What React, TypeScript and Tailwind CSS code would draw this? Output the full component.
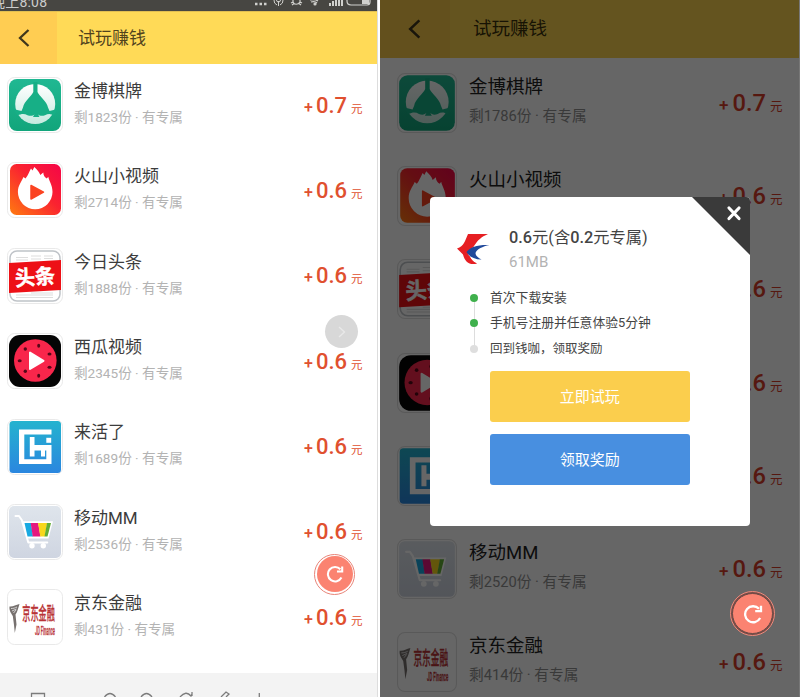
import React from "react";

const FONT = "font-['Roboto','Noto_Sans_CJK_SC',sans-serif]";

function Artwork({ name }: { name: string }) {
  switch (name) {
    case "spade":
      return (
        <g>
          <rect x="2" y="2" width="52" height="52" rx="8" fill="url(#gGreen)" />
          <circle cx="28.2" cy="27" r="20" fill="url(#gPale)" />
          <path d="M26.300 5h4.200v10c1.500 4 9.500 9.500 10.500 15.500l1.500 3.500 8-2-3.500 6.500c-3-2-6-2-9-.3-2.500 1-5.500 1-7-1l1.500 2.800h-6.500l1.500-2.800c-1.500 2-4.500 2-7 1-3-1.700-6-1.700-10 .3L6 32l8.500 2 1.500-3.500c1-6 8.800-11.500 10.300-15.500z" fill="#17af86" />
        </g>
      );
    case "flame":
      return (
        <g>
          <rect x="3" y="2" width="51" height="51" rx="6.500" fill="url(#gFire)" />
          <path d="M27.300 5c3 3 5 5 6 8l3-2.500c0 3 1.500 5 3.500 6l1.500-1.800c.3 3.500 4.200 8 4.200 15.300a17.300 17.300 0 0 1-34.600 0c0-6.500 3.500-10 5.600-15l2 1.500C21 13.500 23 8 24 6.500l1.500 2z" fill="#fff" />
          <path d="M24 23.500v13.500l12.500-6.800z" fill="#fb4321" stroke="#fb4321" strokeWidth="1.500" strokeLinejoin="round" />
        </g>
      );
    case "toutiao":
      return (
        <g>
          <rect x="3" y="3" width="50" height="50" rx="7" fill="#fff" stroke="#bfc3c8" strokeWidth="1.500" />
          <path d="M9 9.500h12M9 12h12M24 8h10M24 11h10M37 8h9M37 10.500h9M9 47h37M9 49.500h37M24 45h22" stroke="#ddd" strokeWidth="1" />
          <path d="M2 15 54 12v30L2 45z" fill="#ed1016" />
          <text x="8" y="36.500" fontSize="21" fontWeight="700" textLength="40" lengthAdjust="spacingAndGlyphs" fill="#fff" stroke="#fff" strokeWidth=".5" transform="rotate(-4 28 30)">头条</text>
        </g>
      );
    case "melon":
      return (
        <g>
          <rect x="2" y="2" width="52" height="52" rx="11" fill="#050505" />
          <circle cx="28.300" cy="27.500" r="21.300" fill="#f8264b" />
          <g fill="#540818">
            <ellipse cx="31.700" cy="12.700" rx="1.500" ry="2" />
            <ellipse cx="42.500" cy="21" rx="2" ry="1.500" />
            <ellipse cx="42.500" cy="34.300" rx="2" ry="1.500" />
            <ellipse cx="31.700" cy="42.700" rx="1.500" ry="2" />
            <ellipse cx="18.300" cy="38.300" rx="1.700" ry="1.700" />
            <ellipse cx="12.700" cy="27.700" rx="2" ry="1.500" />
            <ellipse cx="18.300" cy="16" rx="1.700" ry="1.700" />
          </g>
          <path d="M23 19.500v16.500l13.500-8.200z" fill="#fff" stroke="#fff" strokeWidth="2" strokeLinejoin="round" />
        </g>
      );
    case "laihuo":
      return (
        <g>
          <rect x="2.500" y="2" width="51.500" height="52" rx="3.500" fill="url(#gBlue)" />
          <path d="M12 10.500h32.500v5H17.300v24.700h22V31.500H27.500v6h-4.700V18h4.700v8h17v19H12z" fill="#fff" />
          <path d="M39.300 18.800h4.900v5h-4.900z" fill="#fff" />
          <path d="M34 31h4v6.500h-4z" fill="#fff" />
        </g>
      );
    case "cart":
      return (
        <g>
          <rect x="2" y="2" width="52" height="52" rx="5" fill="url(#gCart)" />
          <path d="M8.500 12h3.500l2.800 4 6.500 22.500h19" fill="none" stroke="#fff" strokeWidth="2" strokeLinecap="round" strokeLinejoin="round" />
          <path d="M15.500 17.200h30.500l-4.500 17.300H20z" fill="#fff" />
          <path d="M17.500 19h6.500l2 13.500h-5.500z" fill="#18a9e1" />
          <path d="M23.700 19h7.500l2.300 13.500h-7.800z" fill="#e4187f" />
          <path d="M31 19h9.200l-2.500 13.500h-4.400z" fill="#f7d71c" />
          <path d="M40 19h4l-3.500 13.500h-3z" fill="#61ae35" />
          <circle cx="25" cy="41.800" r="2.700" fill="#fff" />
          <circle cx="36.300" cy="41.800" r="2.700" fill="#fff" />
        </g>
      );
    default:
      return (
        <g>
          <path d="M2.500 17.500c3.500.5 6-1.500 10-2.500-1.500 4.500-2 8-4 10.500l1 10-1.700 8.500-.8-8-1.200-9C4 24 2 21.500 2.500 17.500z" fill="#77716f" />
          <path d="M4 19.500c2.500 0 4-.5 6-1.500M5 22l4.500-2M6.500 24l2.500-3" stroke="#ddd" strokeWidth=".9" fill="none" />
          <text x="15.300" y="30.500" fontSize="18.500" fontWeight="500" textLength="32.500" lengthAdjust="spacingAndGlyphs" fill="#b93336" stroke="#b93336" strokeWidth=".3">京东金融</text>
          <text x="28" y="45.500" fontSize="12.500" fontWeight="500" textLength="20" lengthAdjust="spacingAndGlyphs" fill="#b93336" stroke="#b93336" strokeWidth=".3">JD Finance</text>
        </g>
      );
  }
}

function AppIcon({ name, big }: { name: string; big?: boolean }) {
  return (
    <svg viewBox="0 0 56 56" className={big ? "size-[60px] shrink-0" : "size-14 shrink-0"}>
      <rect x=".5" y=".5" width="55" height="55" rx="7" fill="#fff" stroke={big ? "#dfdfdf" : "#e9e9e9"} />
      <Artwork name={name} />
    </svg>
  );
}

function Gradients() {
  return (
    <svg className="absolute size-0">
      <defs>
        <linearGradient id="gGreen" x2="0" y2="1"><stop stopColor="#20b892" /><stop offset="1" stopColor="#12a57b" /></linearGradient>
        <linearGradient id="gPale" x2="0" y2="1"><stop stopColor="#fff" /><stop offset="1" stopColor="#c5eadf" /></linearGradient>
        <linearGradient id="gFire" x1="0" y1="1" x2="1" y2="0"><stop stopColor="#ff7a10" /><stop offset=".55" stopColor="#fa2330" /><stop offset="1" stopColor="#f50548" /></linearGradient>
        <linearGradient id="gBlue" x2="0" y2="1"><stop stopColor="#24b3cf" /><stop offset="1" stopColor="#2a86df" /></linearGradient>
        <linearGradient id="gCart" x2="0" y2="1"><stop stopColor="#dfe5ec" /><stop offset="1" stopColor="#cfd5e1" /></linearGradient>
      </defs>
    </svg>
  );
}

const APPS = [
  { icon: "spade", title: "金博棋牌", left: "1823", leftB: "1786", price: "0.7" },
  { icon: "flame", title: "火山小视频", left: "2714", leftB: "2690", price: "0.6" },
  { icon: "toutiao", title: "今日头条", left: "1888", leftB: "1860", price: "0.6" },
  { icon: "melon", title: "西瓜视频", left: "2345", leftB: "2320", price: "0.6" },
  { icon: "laihuo", title: "来活了", left: "1689", leftB: "1660", price: "0.6" },
  { icon: "cart", title: "移动MM", left: "2536", leftB: "2520", price: "0.6" },
  { icon: "jd", title: "京东金融", left: "431", leftB: "414", price: "0.6" },
];

function Back({ className }: { className: string }) {
  return (
    <svg viewBox="0 0 12 18" className={className} fill="none" stroke="#40361c" strokeWidth="2.300">
      <path d="M10.500 1 2 9l8.500 8" />
    </svg>
  );
}

function RefreshIcon({ className }: { className: string }) {
  return (
    <svg viewBox="0 0 20 20" className={className} fill="none" stroke="#fff" strokeWidth="2.300">
      <path d="M17.200 14A8 8 0 1 1 16 4.800" />
      <path d="M18 1.800v5.400h-5.800" />
    </svg>
  );
}

function SmallPhone() {
  return (
    <section className="relative flex h-[697px] w-[377px] shrink-0 flex-col bg-white">
      <div className="flex h-[11px] items-start justify-between overflow-hidden bg-[#474642] text-[#ccc]">
        <span className="-mt-[7px] -ml-[9px] text-[14px] leading-[18px] tracking-[0.2px]">晚上8:08</span>
        <svg viewBox="0 0 120 11" className="mr-[3px] h-[11px] w-[120px]" fill="none" stroke="#d0d0cd" strokeWidth="1.200">
          <path d="M1 4h2.500M5.500 4H8M10 4h2.500" strokeWidth="2.500" />
          <path d="M20 0a5 5 0 0 0 3 5M29 0a5 5 0 0 1-3 5M22.500 0a2 2 0 0 0 4 0M24.500 1v5" strokeWidth="1" />
          <path d="m37 3 2-1c1 3 5 3 7 0l2 1m-10 2 2-1.500M47 5l-2-1.500M39 0v3M46 0v3" />
          <path d="M56 0q5-1 8 1M57 2q4-1 6 1" />
          <circle cx="61" cy="4" r="1" fill="#d0d0cd" />
          <path d="M76 3v3M79 1v5M82 0v6M85 0v6M88 0v6" strokeWidth="2" />
          <path d="M93 0v1q0 4 4 4h16q3 0 3-3V0" />
          <path d="M108 0h7v4h-7z" fill="#d0d0cd" stroke="none" />
        </svg>
      </div>
      <header className="flex h-[53px] items-center border-t border-[#e2bf52] bg-[#ffda57]">
        <div className="flex h-full w-[57px] items-center bg-[#ffcd52] pl-[18px]"><Back className="h-[18px] w-3" /></div>
        <h1 className="ml-[21px] text-[17px] leading-6 text-[#51431d]">试玩赚钱</h1>
      </header>
      <ul className="flex-1">
        {APPS.map((a) => (
          <li key={a.icon} className="flex h-[85.4px] items-start pt-[13px] pr-[14.500px] pl-[7px]">
            <AppIcon name={a.icon} />
            <div className="mt-[1.800px] ml-[11px] flex-1">
              <div className="text-[17px] leading-6 text-[#3c3c3c]">{a.title}</div>
              <div className="mt-1 text-[13.600px] leading-5 text-[#b3b3b3]">剩{a.left}份 · 有专属</div>
            </div>
            <div className="mt-[14.500px] flex items-baseline leading-7 text-[#e0502f]">
              <span className="mr-[3px] text-base leading-7 font-medium">+</span>
              <span className="mr-1 text-[22px] leading-7 font-medium">{a.price}</span>
              <span className="text-[11.500px] leading-7">元</span>
            </div>
          </li>
        ))}
      </ul>
      <footer className="h-6 overflow-hidden bg-[#f3f3f3]">
        <svg viewBox="0 0 377 24" className="h-6 w-[377px]" fill="none" stroke="#7c7c7c" strokeWidth="1.300">
          <path d="M31.500 25v-4.500h13V25M104.500 24q5.500-7 11 0M141 24q5.500-7 11 0M180 24q6-7 11-1l1-2M192 19v4M221 24l5-5 3 2-3 3M259.300 20v4" />
        </svg>
      </footer>
      <div className="absolute top-[315px] left-[325px] flex size-[33px] items-center justify-center rounded-full bg-[#d8d8d8]">
        <svg viewBox="0 0 10 12" className="h-3 w-2.5" fill="none" stroke="#e9e9e9" strokeWidth="1.300"><path d="m2 1 5.500 5L2 11" /></svg>
      </div>
      <div className="absolute top-[553.500px] left-[314px] flex size-[41px] items-center justify-center rounded-full border border-[#e88478] bg-white">
        <div className="flex size-9 items-center justify-center rounded-full bg-[#fb8371]"><RefreshIcon className="size-[18px]" /></div>
      </div>
    </section>
  );
}

const STEPS = [
  { text: "首次下载安装", done: true },
  { text: "手机号注册并任意体验5分钟", done: true },
  { text: "回到钱咖，领取奖励", done: false },
];

function Dialog() {
  return (
    <div className="absolute top-[197px] left-[50px] flex h-[329px] w-[320px] flex-col overflow-hidden rounded bg-white">
      <svg viewBox="0 0 58 58" className="absolute top-0 right-0 size-[58px]">
        <path d="M0 0h58v58z" fill="#3a3a3a" />
        <path d="m37 11 10 10.500M47 11 37 21.500" stroke="#fff" strokeWidth="3.200" strokeLinecap="round" />
      </svg>
      <div className="flex pt-[29px] pl-[27px]">
        <svg viewBox="0 0 33 32" className="mt-[7px] h-8 w-[33px]">
          <path d="M11 1h20c-7 3-10 6-14 12-3.500 5-2 10 3 17.500-7 2-12-1-14-9L0 15.500C7 13 8 8 11 1z" fill="#e61f23" />
          <path d="M20 30.500c-5-2-8-6-9.500-11.500l6-5 5 8 4 4.500z" fill="#fff" />
          <path d="M8 21c1.500 6 5 9.500 12 9.500-3-1-5.500-3.500-7.500-7.500z" fill="#e61f23" />
          <path d="M32.500 12C21 11.500 13 14 9.500 19c3 5 8 7.500 15 7.500-4-2-6-4-6-6.500 1.500-4 7-6.500 14-8z" fill="#20499b" />
        </svg>
        <div className="ml-[19px]">
          <div className="text-[16.300px] leading-6 font-medium text-[#444]">
            0.6<span className="font-normal">元(含</span>0.2<span className="font-normal">元专属)</span>
          </div>
          <div className="text-[15px] leading-6 text-[#b3b3b3]">61MB</div>
        </div>
      </div>
      <ol className="relative mt-[11px] pl-[40px]">
        <div className="absolute top-[13px] left-[43.5px] h-[51px] w-px bg-[#ddd]" />
        {STEPS.map((s) => (
          <li key={s.text} className="relative flex h-[25.6px] items-center">
            <span className={s.done ? "size-2 rounded-full bg-[#3fb04c]" : "size-2 rounded-full bg-[#dedede]"} />
            <span className={s.done ? "ml-3 text-[12.800px] leading-5 text-[#444]" : "ml-3 text-[12.500px] leading-5 text-[#444]"}>{s.text}</span>
          </li>
        ))}
      </ol>
      <div className="mt-[9px] ml-[59.500px] flex w-[200.500px] flex-col gap-3 text-[15px] text-white">
        <button className="h-[51px] rounded-[3px] bg-[#fbce4d] pt-px">立即试玩</button>
        <button className="h-[51px] rounded-[3px] bg-[#488fe0] pt-px">领取奖励</button>
      </div>
    </div>
  );
}

function LargePhone() {
  return (
    <section className="relative h-[697px] w-[419px] shrink-0 overflow-hidden bg-white">
      <header className="flex h-[58px] items-center bg-[#fbd34e]">
        <div className="flex h-full w-[70px] items-center bg-[#f7c94a] pl-[28px]"><Back className="h-5 w-[13px]" /></div>
        <h1 className="ml-[23px] text-[18.5px] leading-6 text-[#3a300c]">试玩赚钱</h1>
      </header>
      <ul>
        {APPS.map((a) => (
          <li key={a.icon} className="flex h-[93.2px] items-start pt-[15px] pr-[16.500px] pl-[16.5px]">
            <AppIcon name={a.icon} big />
            <div className="mt-[2px] ml-[12.5px] flex-1">
              <div className="text-[18.500px] leading-6 text-[#222]">{a.title}</div>
              <div className="mt-[7px] text-[14.700px] leading-5 text-[#909090]">剩{a.leftB}份 · 有专属</div>
            </div>
            <div className="mt-4 flex items-baseline text-[#d83d28]">
              <span className="mr-1 text-[17px] leading-7 font-medium">+</span>
              <span className="mr-1 text-[23.700px] leading-7 font-medium">{a.price}</span>
              <span className="text-[12.500px] leading-7">元</span>
            </div>
          </li>
        ))}
      </ul>
      <div className="absolute inset-0 bg-black/60" />
      <Dialog />
      <div className="absolute top-[591px] left-[350px] flex size-[45px] items-center justify-center rounded-full border border-[#f08a7b] bg-[#754c48]">
        <div className="size-[41px] rounded-full border border-[#6b4a46] bg-[#fb8371]">
          <div className="flex size-full items-center justify-center"><RefreshIcon className="size-[20px]" /></div>
        </div>
      </div>
    </section>
  );
}

export default function App() {
  return (
    <main className={`flex h-[697px] w-[800px] overflow-hidden bg-white ${FONT}`}>
      <Gradients />
      <SmallPhone />
      <div className="w-[3px] shrink-0 border-l border-[#ddd] bg-white" />
      <LargePhone />
      <div className="w-px bg-[#777]" />
    </main>
  );
}
